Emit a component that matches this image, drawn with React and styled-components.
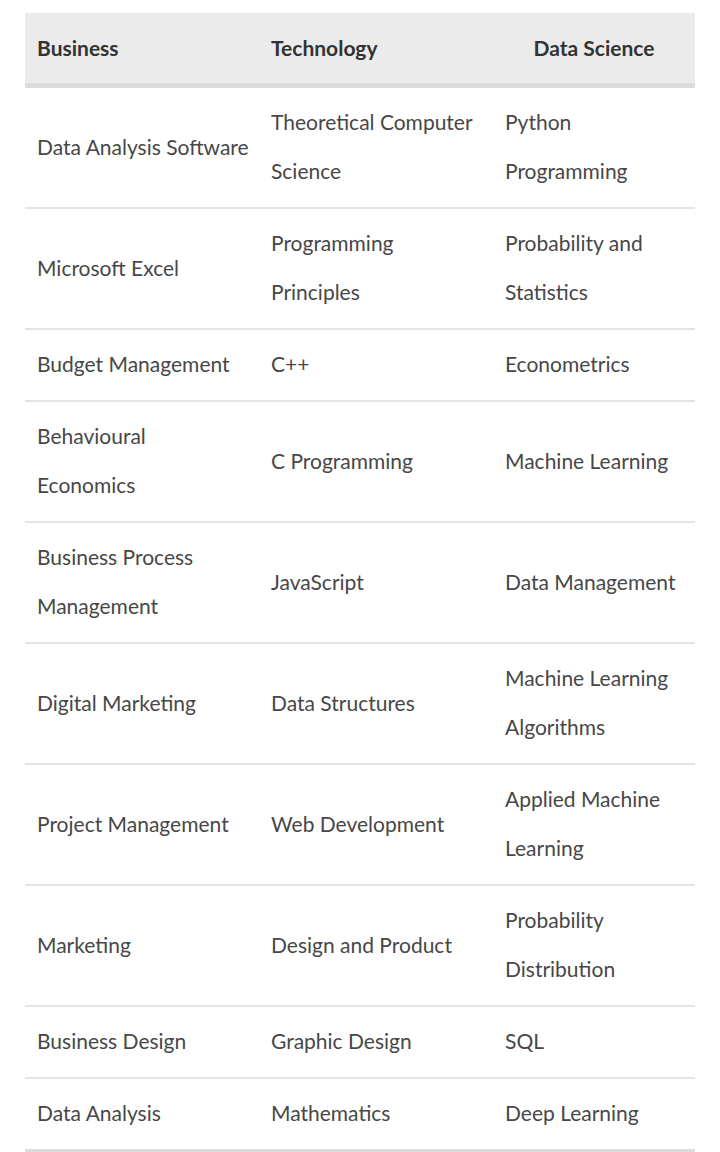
import React from 'react';
import styled, { createGlobalStyle } from "styled-components"

//global
const GlobalStyle = createGlobalStyle`
  body {
    margin: 0;
    background: #ffffff;
    font-family: Lato, "Open Sans", "Liberation Sans", sans-serif;
  }
`

//style
const Page = styled.div`
  padding: 13px 25px 0 25px;
`

const Table = styled.div`
  width: 670px;
  border-bottom: 5px solid #dcdcdc;
`

const Row = styled.div`
  display: grid;
  grid-template-columns: 234px 234px 1fr;
  align-items: center;
  border-bottom: ${p => (p.$head ? "5px solid #dcdcdc" : "2px solid #e4e4e4")};
  background: ${p => (p.$head ? "#ebebeb" : "transparent")};
  &:last-child {
    border-bottom: none;
  }
`

const HeadCell = styled.div`
  padding: 0 12px 2px 12px;
  height: 68px;
  display: flex;
  align-items: center;
  justify-content: ${p => (p.$center ? "center" : "flex-start")};
  font-size: 21px;
  font-weight: 700;
  color: #333333;
`

const Cell = styled.div`
  padding: 9px 12px 12px 12px;
  font-size: 21px;
  line-height: 49px;
  color: #474747;
  span {
    display: block;
    white-space: nowrap;
  }
`

const rows = [
  [["Data Analysis Software"], ["Theoretical Computer", "Science"], ["Python", "Programming"]],
  [["Microsoft Excel"], ["Programming", "Principles"], ["Probability and", "Statistics"]],
  [["Budget Management"], ["C++"], ["Econometrics"]],
  [["Behavioural", "Economics"], ["C Programming"], ["Machine Learning"]],
  [["Business Process", "Management"], ["JavaScript"], ["Data Management"]],
  [["Digital Marketing"], ["Data Structures"], ["Machine Learning", "Algorithms"]],
  [["Project Management"], ["Web Development"], ["Applied Machine", "Learning"]],
  [["Marketing"], ["Design and Product"], ["Probability", "Distribution"]],
  [["Business Design"], ["Graphic Design"], ["SQL"]],
  [["Data Analysis"], ["Mathematics"], ["Deep Learning"]],
]

const App = () => {
  return (
    <Page>
      <GlobalStyle />
      <Table>
        <Row $head>
          <HeadCell>Business</HeadCell>
          <HeadCell>Technology</HeadCell>
          <HeadCell $center>Data Science</HeadCell>
        </Row>
        {rows.map((row, i) => (
          <Row key={i}>
            {row.map((lines, j) => (
              <Cell key={j}>
                {lines.map(l => <span key={l}>{l}</span>)}
              </Cell>
            ))}
          </Row>
        ))}
      </Table>
    </Page>
  );
}

export default App;
